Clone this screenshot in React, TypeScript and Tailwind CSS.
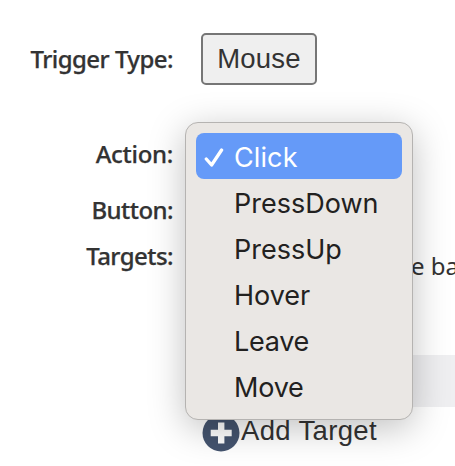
import React from 'react';
import clsx from 'clsx';

interface FieldLabelProps {
  className?: string;
  children: React.ReactNode;
}

interface ActionOption {
  name: string;
  tracking: string;
}

const actionOptions: ActionOption[] = [
  { name: 'Click', tracking: 'tracking-[0.1px]' },
  { name: 'PressDown', tracking: 'tracking-[0px]' },
  { name: 'PressUp', tracking: 'tracking-[0px]' },
  { name: 'Hover', tracking: 'tracking-[0px]' },
  { name: 'Leave', tracking: 'tracking-[-0.3px]' },
  { name: 'Move', tracking: 'tracking-[-0.2px]' }
];

const FieldLabel = ({ className, children }: FieldLabelProps) => (
  <div
    className={clsx(
      "flex w-[173px] shrink-0 items-center justify-end pb-[2px] font-['Noto_Sans',sans-serif] text-[24px] font-medium whitespace-nowrap [-webkit-text-stroke:0.25px_#333]",
      className
    )}
  >
    {children}
  </div>
);

const ActionMenu = ({ selected }: { selected: string }) => (
  <ul className="absolute top-[122px] left-[185px] h-[298px] w-[228px] rounded-[13px] border border-[#b5b3b1] bg-[#eae7e4] p-[10px] shadow-[0_8px_36px_rgba(0,0,0,0.25)]">
    {actionOptions.map(({ name, tracking }) => (
      <li
        key={name}
        className={clsx(
          "flex h-[46px] items-center rounded-[8px] pt-[2px] font-['Inter',sans-serif] text-[27px]",
          name === selected ? 'bg-[#659af8] text-white' : 'text-[#222120]'
        )}
      >
        <span className="flex w-[38px] shrink-0 pl-[8px]">
          {name === selected && (
            <svg width="20" height="20" viewBox="0 0 20 20" fill="none" className="mt-[2px]">
              <path d="M2.3 11L7.6 17L17.6 2" stroke="currentColor" strokeWidth="3.3" strokeLinecap="round" strokeLinejoin="round" />
            </svg>
          )}
        </span>
        <span className={clsx('leading-none', tracking)}>{name}</span>
      </li>
    ))}
  </ul>
);

export default function App() {
  return (
    <main className="relative h-[466px] w-[455px] overflow-hidden bg-white text-[#333]">
      <div className="flex h-[122px] pt-[33px]">
        <FieldLabel className="h-[54px] tracking-[-0.55px]">Trigger Type:</FieldLabel>
        <button
          type="button"
          className="ml-7 h-[52px] w-[116px] rounded-[5px] border-2 border-[#767676] bg-[#efefef] font-['Liberation_Sans',Arial,sans-serif] text-[27.5px] leading-none tracking-[0.2px]"
        >
          Mouse
        </button>
      </div>
      <FieldLabel className="h-[66px] tracking-[-0.3px]">Action:</FieldLabel>
      <FieldLabel className="h-[46px] tracking-[-0.55px]">Button:</FieldLabel>
      <div className="flex h-[121px]">
        <FieldLabel className="h-[46px] tracking-[-0.55px]">Targets:</FieldLabel>
        <p className="mt-[14px] ml-[238px] font-['Noto_Sans',sans-serif] text-2xl leading-[36px] whitespace-nowrap">
          e ba
        </p>
      </div>
      <div className="ml-[201px] h-[52px] bg-[#efeff1]" />
      <div className="ml-[202px] flex h-[48px] items-center">
        <svg width="38" height="38" viewBox="0 0 38 38" className="mt-[3px] shrink-0">
          <circle cx="19" cy="19" r="18.5" fill="#44546f" />
          <path d="M16 8.5h6.4v7.3h7.3v6.4h-7.3v7.3H16v-7.3H8.7v-6.4H16z" fill="#fff" />
        </svg>
        <span className="ml-px font-['Liberation_Sans',Arial,sans-serif] text-[27.5px] leading-none tracking-[0.35px]">Add Target</span>
      </div>
      <ActionMenu selected="Click" />
    </main>
  );
}
